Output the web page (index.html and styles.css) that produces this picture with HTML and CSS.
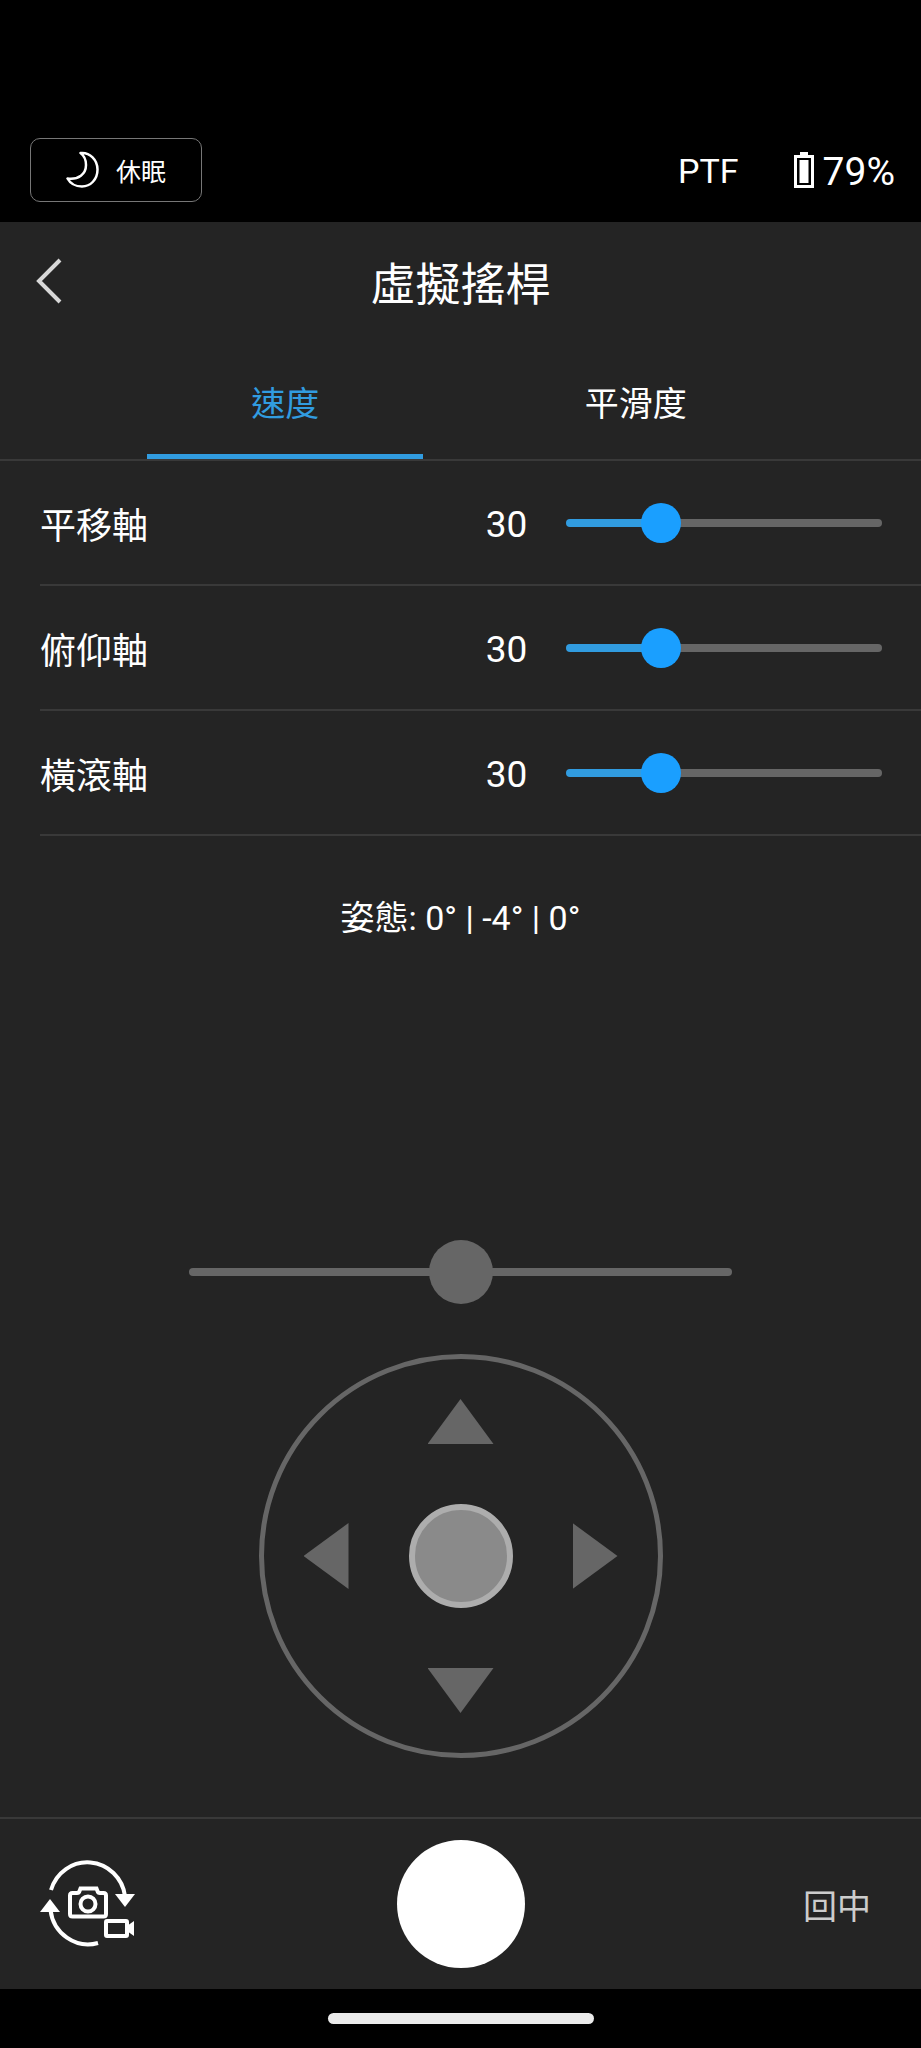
FILE: index.html
```html
<!DOCTYPE html>
<html lang="zh-Hant">
<head>
    <meta charset="UTF-8">
    <meta name="viewport" content="width=device-width, initial-scale=1.0">
    <title>虛擬搖桿</title>
    <link rel="stylesheet" href="styles.css">
</head>
<body>

<div class="status-bar">
    <button class="sleep-button" type="button">
        <svg class="moon-icon" viewBox="0 0 34 38" aria-hidden="true">
            <path d="M14.500 2C24 1 31.500 9 31.500 18.500C31.500 28.500 24.500 35.500 16 35.500C9.500 35.500 4 32 1.500 27.500C12.500 29 20 23 20 14C20 9 18 4.500 14.500 2Z"/>
        </svg>
        <span>休眠</span>
    </button>
    <span class="mode">PTF</span>
    <div class="battery">
        <svg class="battery-icon" viewBox="0 0 20 36" aria-hidden="true">
            <rect x="6" y="0" width="8" height="4"/>
            <path fill-rule="evenodd" d="M0 3H20V36H0ZM3 6V33H17V6Z"/>
            <rect x="5.500" y="8" width="9" height="23"/>
        </svg>
        <span>79%</span>
    </div>
</div>

<div class="app">
    <header class="header">
        <button class="back-button" type="button" aria-label="返回">
            <svg class="back-icon" viewBox="0 0 26 46" aria-hidden="true">
                <path d="M24 2L3 23L24 44"/>
            </svg>
        </button>
        <h1>虛擬搖桿</h1>
    </header>

    <nav class="tabs">
        <button class="tab active" type="button">速度</button>
        <button class="tab" type="button">平滑度</button>
    </nav>

    <div class="settings">
        <div class="setting">
            <label for="pan">平移軸</label>
            <output for="pan">30</output>
            <div class="slider" style="--value: 30%">
                <input type="range" id="pan" min="0" max="100" value="30">
            </div>
        </div>
        <div class="setting">
            <label for="tilt">俯仰軸</label>
            <output for="tilt">30</output>
            <div class="slider" style="--value: 30%">
                <input type="range" id="tilt" min="0" max="100" value="30">
            </div>
        </div>
        <div class="setting">
            <label for="roll">橫滾軸</label>
            <output for="roll">30</output>
            <div class="slider" style="--value: 30%">
                <input type="range" id="roll" min="0" max="100" value="30">
            </div>
        </div>
    </div>

    <main class="control">
        <p class="attitude">姿態: 0° | -4° | 0°</p>

        <div class="sticks">
            <div class="slider roll-slider">
                <input type="range" id="rollStick" min="-100" max="100" value="0" aria-label="橫滾軸">
            </div>
            <div class="joystick">
                <button class="arrow up" type="button" aria-label="上"></button>
                <button class="arrow left" type="button" aria-label="左"></button>
                <button class="knob" type="button" aria-label="搖桿"></button>
                <button class="arrow right" type="button" aria-label="右"></button>
                <button class="arrow down" type="button" aria-label="下"></button>
            </div>
        </div>
    </main>

    <footer class="toolbar">
        <button class="switch-button" type="button" aria-label="切換拍照錄影">
            <svg class="switch-icon" viewBox="0 0 96 88" aria-hidden="true">
                <g class="line">
                    <path d="M11 30A38 39 0 0 1 85 36"/>
                    <path d="M10.500 50A38 39 0 0 0 58 83"/>
                    <path d="M32.500 33H37Q39 33 39.500 31L40.500 28.500H56.500L57.500 31Q58 33 60 33H63.500Q66 33 66 35.500V54Q66 56.500 63.500 56.500H32.500Q30 56.500 30 54V35.500Q30 33 32.500 33Z"/>
                    <circle cx="48" cy="44" r="7.500"/>
                    <rect x="66" y="61" width="21" height="15" rx="1"/>
                </g>
                <path d="M75 34H95L85 47Z"/>
                <path d="M0 52H20L10 39Z"/>
                <path d="M87 66L94 61V76L87 71Z"/>
            </svg>
        </button>
        <button class="shutter" type="button" aria-label="快門"></button>
        <button class="center-button" type="button">回中</button>
    </footer>
</div>

<div class="home-bar"></div>

<script>
    document.querySelectorAll('.setting input').forEach(input => {
        input.addEventListener('input', () => {
            const row = input.closest('.setting');
            row.querySelector('output').textContent = input.value;
            input.parentElement.style.setProperty('--value', `${input.value}%`);
        });
    });
</script>

</body>
</html>
```

FILE: styles.css
```css
* {
    box-sizing: border-box;
}

body {
    margin: 0;
    min-height: 100vh;
    display: flex;
    flex-direction: column;
    background-color: #000;
    color: #fff;
    font-family: Roboto, "Noto Sans CJK TC", sans-serif;
    font-size: 34px;
}

button {
    padding: 0;
    border: none;
    background: none;
    color: inherit;
    font: inherit;
    cursor: pointer;
}

svg {
    display: block;
}

/* status bar */

.status-bar {
    display: flex;
    align-items: center;
    padding: 138px 26px 20px 30px;
}

.sleep-button {
    display: flex;
    align-items: center;
    justify-content: center;
    gap: 16px;
    width: 172px;
    height: 64px;
    border: 1px solid #777;
    border-radius: 10px;
    font-size: 25px;
}

.moon-icon {
    width: 34px;
    height: 38px;
    fill: none;
    stroke: #fff;
    stroke-width: 2.5;
    stroke-linejoin: round;
}

.mode {
    margin-left: auto;
    padding-top: 2px;
}

.battery {
    display: flex;
    align-items: center;
    gap: 9px;
    margin-left: 55px;
    font-size: 39px;
}

.battery span {
    padding-top: 3px;
}

.battery-icon {
    width: 20px;
    height: 36px;
    fill: #fff;
}

/* header */

.app {
    flex: 1;
    display: flex;
    flex-direction: column;
    background-color: #242424;
}

.header {
    display: grid;
    grid-template-columns: 100px 1fr 100px;
    align-items: center;
    height: 122px;
    padding-bottom: 4px;
}

.header h1 {
    margin: 0;
    font-size: 45px;
    font-weight: 400;
    text-align: center;
}

.back-button {
    justify-self: start;
    padding: 0 36px;
}

.back-icon {
    width: 26px;
    height: 46px;
    fill: none;
    stroke: #d8d8d8;
    stroke-width: 4;
}

/* tabs */

.tabs {
    display: flex;
    justify-content: space-between;
    padding: 0 16%;
    border-bottom: 2px solid #393939;
}

.tab {
    width: 44%;
    height: 115px;
    border-top: 5px solid transparent;
    border-bottom: 5px solid transparent;
}

.tab.active {
    border-bottom-color: #319ce0;
    color: #319ce0;
}

/* axis settings */

.settings {
    padding-left: 40px;
}

.setting {
    display: flex;
    align-items: center;
    height: 125px;
    padding-right: 39px;
    border-bottom: 2px solid #393939;
    font-size: 36px;
}

.setting output {
    margin-left: auto;
    margin-right: 39px;
    padding-top: 3px;
    font-size: 37px;
}

.slider {
    display: flex;
    align-items: center;
    width: 37.5%;
    height: 8px;
    border-radius: 4px;
    background: linear-gradient(to right, #319ce0 var(--value), #666 var(--value));
}

/* the thumb centre has to reach both ends of the track */
.slider input {
    flex: 1;
    min-width: 0;
    height: 40px;
    margin: 0 -20px;
    appearance: none;
    background: transparent;
}

.slider input::-webkit-slider-thumb {
    appearance: none;
    width: 40px;
    height: 40px;
    border-radius: 50%;
    background-color: #1a9fff;
}

/* joystick */

.control {
    flex: 1;
    display: flex;
    flex-direction: column;
    align-items: center;
    justify-content: space-between;
    padding: 55px 0 59px;
}

.attitude {
    margin: 0;
}

.sticks {
    display: flex;
    flex-direction: column;
    align-items: center;
    gap: 78px;
    width: 100%;
}

.roll-slider {
    width: 59%;
    background: #666;
}

.roll-slider input {
    height: 64px;
    margin: 0 -32px;
}

.roll-slider input::-webkit-slider-thumb {
    width: 64px;
    height: 64px;
    background-color: #666;
}

.joystick {
    display: grid;
    grid-template-columns: 45px 1fr 45px;
    grid-template-rows: 45px 1fr 45px;
    grid-template-areas:
        ". up ."
        "left knob right"
        ". down .";
    place-items: center;
    width: 404px;
    height: 404px;
    padding: 40px;
    border: 5px solid #666;
    border-radius: 50%;
}

.arrow {
    background-color: #666;
}

.up, .down {
    width: 66px;
    height: 45px;
}

.left, .right {
    width: 45px;
    height: 66px;
}

.up {
    grid-area: up;
    clip-path: polygon(50% 0, 100% 100%, 0 100%);
}

.down {
    grid-area: down;
    clip-path: polygon(0 0, 100% 0, 50% 100%);
}

.left {
    grid-area: left;
    clip-path: polygon(0 50%, 100% 0, 100% 100%);
}

.right {
    grid-area: right;
    clip-path: polygon(0 0, 100% 50%, 0 100%);
}

.knob {
    grid-area: knob;
    width: 104px;
    height: 104px;
    border: 6px solid #adadad;
    border-radius: 50%;
    background-color: #8a8a8a;
}

/* bottom toolbar */

.toolbar {
    display: grid;
    grid-template-columns: 1fr auto 1fr;
    align-items: center;
    height: 172px;
    padding: 0 40px;
    border-top: 2px solid #393939;
}

.switch-button {
    justify-self: start;
}

.switch-icon {
    width: 96px;
    height: 88px;
    fill: #fff;
}

.switch-icon .line {
    fill: none;
    stroke: #fff;
    stroke-width: 4;
}

.shutter {
    width: 128px;
    height: 128px;
    border-radius: 50%;
    background-color: #fff;
}

.center-button {
    justify-self: end;
    padding: 0 10px;
    color: #ccc;
}

.home-bar {
    align-self: center;
    width: 266px;
    height: 11px;
    margin: 24px 0;
    border-radius: 6px;
    background-color: #ebebeb;
}
```
